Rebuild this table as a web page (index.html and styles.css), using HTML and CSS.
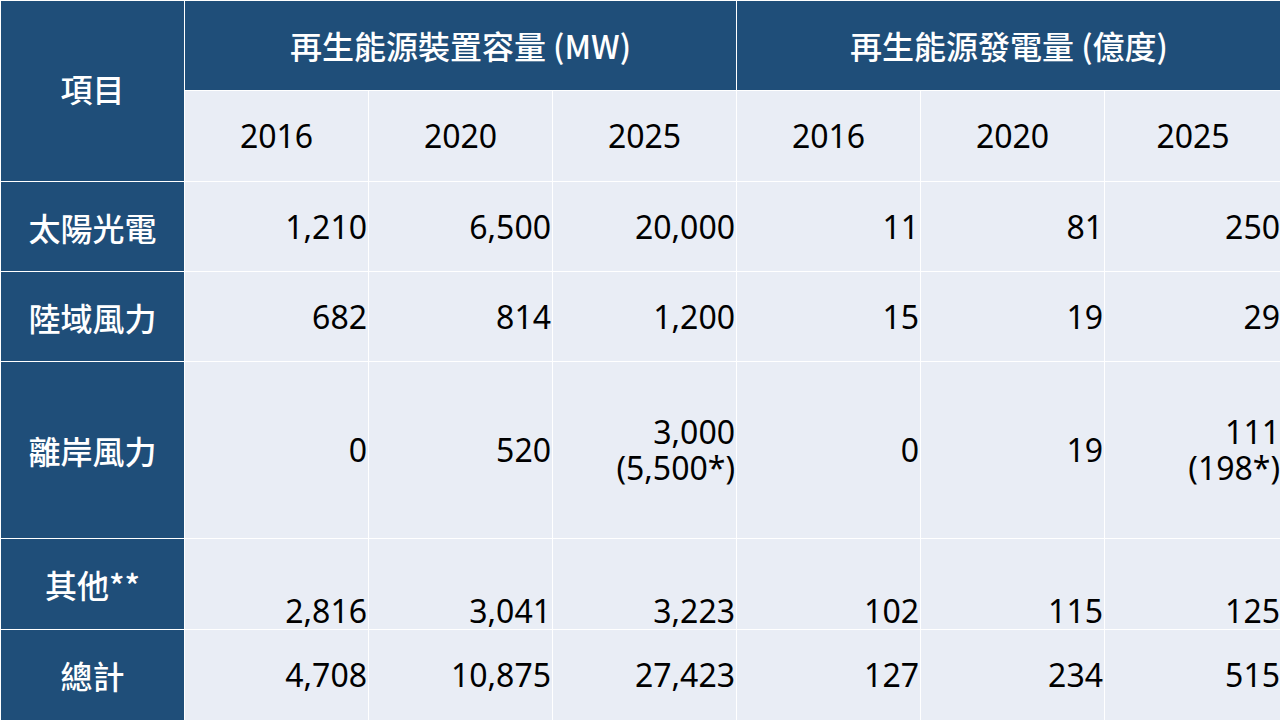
FILE: index.html
```html
<!DOCTYPE html>
<html lang="zh-Hant">
<head>
<meta charset="utf-8">
<title>再生能源</title>
<link rel="stylesheet" href="styles.css">
</head>
<body>
<table class="re-table">
  <colgroup>
    <col class="c-label">
    <col class="c-num"><col class="c-num"><col class="c-num">
    <col class="c-num"><col class="c-num"><col class="c-last">
  </colgroup>
  <thead>
    <tr class="r-head1">
      <th rowspan="2" class="head-dark item">項目</th>
      <th colspan="3" class="head-dark">再生能源裝置容量 (MW)</th>
      <th colspan="3" class="head-dark">再生能源發電量 (億度)</th>
    </tr>
    <tr class="r-head2">
      <th class="year">2016</th><th class="year">2020</th><th class="year">2025</th>
      <th class="year">2016</th><th class="year">2020</th><th class="year">2025</th>
    </tr>
  </thead>
  <tbody>
    <tr class="r-std">
      <th class="label">太陽光電</th>
      <td>1,210</td><td>6,500</td><td>20,000</td><td>11</td><td>81</td><td>250</td>
    </tr>
    <tr class="r-std">
      <th class="label">陸域風力</th>
      <td>682</td><td>814</td><td>1,200</td><td>15</td><td>19</td><td>29</td>
    </tr>
    <tr class="r-tall">
      <th class="label">離岸風力</th>
      <td>0</td><td>520</td><td class="two"><span class="ln">3,000</span><span class="ln">(5,500*)</span></td><td>0</td><td>19</td><td class="two"><span class="ln">111</span><span class="ln">(198*)</span></td>
    </tr>
    <tr class="r-other">
      <th class="label">其他**</th>
      <td>2,816</td><td>3,041</td><td>3,223</td><td>102</td><td>115</td><td>125</td>
    </tr>
    <tr class="r-total">
      <th class="label">總計</th>
      <td>4,708</td><td>10,875</td><td>27,423</td><td>127</td><td>234</td><td>515</td>
    </tr>
  </tbody>
</table>
</body>
</html>
```
FILE: styles.css
```css
html, body {
  margin: 0;
  padding: 0;
  background: #ffffff;
}
body {
  width: 1280px;
  height: 720px;
  overflow: hidden;
  font-family: "Noto Sans", "Noto Sans CJK TC", sans-serif;
}
.re-table {
  width: 1281px;
  border-collapse: collapse;
  table-layout: fixed;
  font-size: 32px;
  color: #000;
}
.c-label { width: 184px; }
.c-num { width: 184px; }
.c-last { width: 177px; }
.re-table th,
.re-table td {
  border: 1px solid #ffffff;
  padding: 0;
  font-weight: normal;
  line-height: 36px;
  background: #e9edf5;
}
.re-table .head-dark,
.re-table .label {
  background: #1f4e79;
  color: #ffffff;
  text-align: center;
  vertical-align: middle;
  font-family: "Noto Sans CJK TC", sans-serif;
  font-weight: 500;
}
.re-table .item { padding-bottom: 6px; }
.r-head1 { height: 90px; }
.r-head1 .head-dark[colspan] { vertical-align: middle; padding-bottom: 2px; }
.r-head2 { height: 91px; }
.year {
  text-align: center;
  vertical-align: middle;
  padding-top: 2px;
}
.re-table td {
  text-align: right;
  vertical-align: middle;
  padding-right: 1px;
}
.ln {
  display: block;
  height: 36px;
  line-height: 36px;
}
.r-std { height: 90px; }
.r-tall { height: 177px; }
.r-other { height: 91px; }
.r-other td { vertical-align: bottom; padding-bottom: 0; }
.r-total { height: 91px; }
```
